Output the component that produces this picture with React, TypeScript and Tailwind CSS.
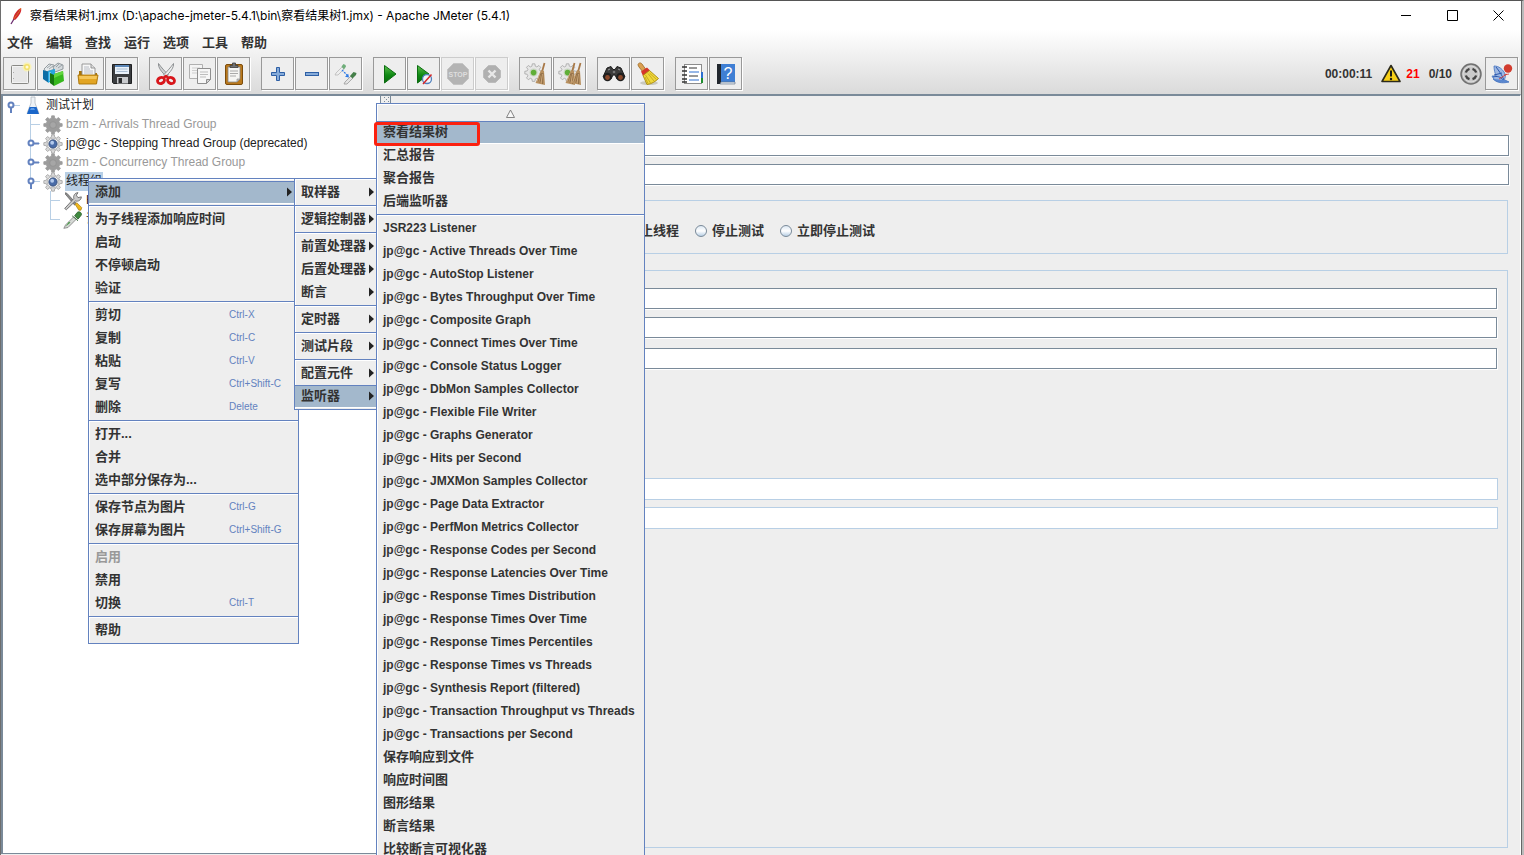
import type { ReactNode } from "react";
import clsx from "clsx";

type Handle = "open" | "closed" | "none";

interface MenuEntry {
  label: string;
  keys?: string;
  sub?: boolean;
  active?: boolean;
  disabled?: boolean;
}

const menuBar = ["文件", "编辑", "查找", "运行", "选项", "工具", "帮助"];

const nodeMenu: MenuEntry[][] = [
  [{ label: "添加", sub: true, active: true }],
  [{ label: "为子线程添加响应时间" }, { label: "启动" }, { label: "不停顿启动" }, { label: "验证" }],
  [
    { label: "剪切", keys: "Ctrl-X" },
    { label: "复制", keys: "Ctrl-C" },
    { label: "粘贴", keys: "Ctrl-V" },
    { label: "复写", keys: "Ctrl+Shift-C" },
    { label: "删除", keys: "Delete" },
  ],
  [{ label: "打开..." }, { label: "合并" }, { label: "选中部分保存为..." }],
  [
    { label: "保存节点为图片", keys: "Ctrl-G" },
    { label: "保存屏幕为图片", keys: "Ctrl+Shift-G" },
  ],
  [{ label: "启用", disabled: true }, { label: "禁用" }, { label: "切换", keys: "Ctrl-T" }],
  [{ label: "帮助" }],
];

const addMenu: MenuEntry[][] = [
  [{ label: "取样器", sub: true }],
  [{ label: "逻辑控制器", sub: true }],
  [
    { label: "前置处理器", sub: true },
    { label: "后置处理器", sub: true },
    { label: "断言", sub: true },
  ],
  [{ label: "定时器", sub: true }],
  [{ label: "测试片段", sub: true }],
  [
    { label: "配置元件", sub: true },
    { label: "监听器", sub: true, active: true },
  ],
];

const listenerMenu: MenuEntry[][] = [
  [{ label: "察看结果树", active: true }, { label: "汇总报告" }, { label: "聚合报告" }, { label: "后端监听器" }],
  [
    { label: "JSR223 Listener" },
    { label: "jp@gc - Active Threads Over Time" },
    { label: "jp@gc - AutoStop Listener" },
    { label: "jp@gc - Bytes Throughput Over Time" },
    { label: "jp@gc - Composite Graph" },
    { label: "jp@gc - Connect Times Over Time" },
    { label: "jp@gc - Console Status Logger" },
    { label: "jp@gc - DbMon Samples Collector" },
    { label: "jp@gc - Flexible File Writer" },
    { label: "jp@gc - Graphs Generator" },
    { label: "jp@gc - Hits per Second" },
    { label: "jp@gc - JMXMon Samples Collector" },
    { label: "jp@gc - Page Data Extractor" },
    { label: "jp@gc - PerfMon Metrics Collector" },
    { label: "jp@gc - Response Codes per Second" },
    { label: "jp@gc - Response Latencies Over Time" },
    { label: "jp@gc - Response Times Distribution" },
    { label: "jp@gc - Response Times Over Time" },
    { label: "jp@gc - Response Times Percentiles" },
    { label: "jp@gc - Response Times vs Threads" },
    { label: "jp@gc - Synthesis Report (filtered)" },
    { label: "jp@gc - Transaction Throughput vs Threads" },
    { label: "jp@gc - Transactions per Second" },
    { label: "保存响应到文件" },
    { label: "响应时间图" },
    { label: "图形结果" },
    { label: "断言结果" },
    { label: "比较断言可视化器" },
  ],
];

const isLatin = (s: string) => /^[\x20-\x7e]+$/.test(s);

function Svg({ children, size = 24 }: { children: ReactNode; size?: number }) {
  return (
    <svg width={size} height={size} viewBox="0 0 24 24" fill="none" aria-hidden="true" className="shrink-0">
      {children}
    </svg>
  );
}

/* ---------- toolbar icons ---------- */

const NewIcon = () => (
  <Svg>
    <rect x="3.500" y="3.500" width="17" height="18" rx="1" fill="#f3f3f3" stroke="#8a8a86" />
    <rect x="5" y="5" width="14" height="15" fill="#e6e6e6" />
    <path d="M5.500 10v1M5.500 16v1" stroke="#aaa" />
    <circle cx="19" cy="5" r="4.500" fill="#fdf3a0" opacity=".7" />
    <circle cx="19" cy="5" r="3" fill="#f3e06a" />
    <circle cx="19" cy="5" r="1.500" fill="#fffbd8" />
  </Svg>
);

const TemplatesIcon = () => (
  <Svg>
    <path d="M2 7l5-5 5 1 1 4-9 3z" fill="#e4e8ea" stroke="#7d868c" strokeWidth=".8" />
    <path d="M11 5l5-4 5 2v4l-8 3z" fill="#d5dadd" stroke="#7d868c" strokeWidth=".8" />
    <path d="M5 6l4-3M7 7l4-3M14 5l3-3M16 6l4-3" stroke="#8b9499" strokeWidth=".8" />
    <path d="M1 8l5 1.500v11L1 17z" fill="#0d6ea6" />
    <path d="M6 9l7-2v10l-7 4z" fill="#26a7e0" />
    <path d="M8 10v9" stroke="#bfe8fa" />
    <path d="M8 11l4 2v11l-4-3z" fill="#16760f" />
    <path d="M12 12l9-3 1 10-10 5z" fill="#37b81d" />
    <path d="M12 12l9-3 .3 3-9.300 4z" fill="#63d63f" />
  </Svg>
);

const OpenIcon = () => (
  <Svg>
    <path d="M3 9h5l2 2h11v10H3z" fill="#a8740a" />
    <path d="M6 2h9l4 4v10H6z" fill="#f7f7f7" stroke="#8e8e8e" strokeWidth=".9" />
    <path d="M15 2v4h4" fill="#ddd" stroke="#8e8e8e" strokeWidth=".9" />
    <path d="M8 5h5M8 7h6M8 9h9M8 11h9" stroke="#b8bcc4" />
    <path d="M2 13h20l-1.500 9H3z" fill="#e2a524" stroke="#a8740a" strokeWidth=".9" />
    <path d="M3 14h18l-.5 3H3.500z" fill="#f4c65a" />
  </Svg>
);

const SaveIcon = () => (
  <Svg>
    <path d="M2.500 2.500h19v19h-18l-1-1z" fill="#3b3d40" stroke="#1f2022" />
    <rect x="5" y="3" width="14" height="9" fill="#eaf2fa" />
    <rect x="5" y="3" width="14" height="2" fill="#5c87b8" />
    <path d="M6.500 7h11M6.500 9.500h11" stroke="#a9bdd2" />
    <rect x="7" y="15" width="11" height="6.500" fill="#c9cbce" />
    <rect x="8.500" y="16" width="3.500" height="5" fill="#2a2b2d" />
  </Svg>
);

const CutIcon = () => (
  <Svg>
    <path d="M4.500 1.500c-.5 4 3 8.500 8 13l2-1.500C10.500 9 7 5 4.500 1.500z" fill="#d0d2d3" stroke="#85888a" strokeWidth=".9" />
    <path d="M19.500 1.500c.5 4-3 8.500-8 13l-2-1.500c4-4 7.500-8 10-11.500z" fill="#edeeee" stroke="#85888a" strokeWidth=".9" />
    <ellipse cx="7" cy="18.500" rx="3.600" ry="2.900" stroke="#d8161b" strokeWidth="2.800" transform="rotate(-25 7 18.500)" />
    <ellipse cx="17" cy="18.500" rx="3.600" ry="2.900" stroke="#d8161b" strokeWidth="2.800" transform="rotate(25 17 18.500)" />
    <path d="M9.500 16L12 14l2.500 2" stroke="#d8161b" strokeWidth="2.400" />
  </Svg>
);

const CopyIcon = () => (
  <Svg>
    <path d="M1.500 2.500h13v14h-13z" fill="#f4f4f4" stroke="#b0b0b0" />
    <path d="M4 6h8M4 8.500h8M4 11h5" stroke="#cfcfcf" />
    <path d="M9.500 6.500h13v11l-4 4h-9z" fill="#f6f6f6" stroke="#8f8f8f" />
    <path d="M12 10h8M12 12.500h8M12 15h6" stroke="#bdbdbd" />
    <path d="M18.500 21.500v-4h4z" fill="#d2d2d2" stroke="#8f8f8f" />
  </Svg>
);

const PasteIcon = () => (
  <Svg>
    <rect x="3.500" y="2.500" width="17" height="20" rx="1.500" fill="#b9781c" stroke="#7c4c0c" />
    <path d="M6 5h12v12l-3 3H6z" fill="#f5f5f3" stroke="#888" strokeWidth=".8" />
    <path d="M8 9h8M8 11.500h8M8 14h6" stroke="#a9a9a9" />
    <path d="M15 20v-3h3z" fill="#c9c9c9" stroke="#888" strokeWidth=".6" />
    <path d="M8 5.500V3.500h2.500V1h3v2.500H16v2z" fill="#6f7173" stroke="#3d3e3f" strokeWidth=".8" />
  </Svg>
);

const PlusIcon = () => (
  <Svg>
    <path d="M10.500 5.500h3v5h5v3h-5v5h-3v-5h-5v-3h5z" fill="#86abd9" stroke="#2d5fa5" />
  </Svg>
);

const MinusIcon = () => (
  <Svg>
    <rect x="5.500" y="10.500" width="13" height="3" fill="#86abd9" stroke="#2d5fa5" />
  </Svg>
);

const ToggleIcon = () => (
  <Svg>
    <path d="M1 13l1-2 6-6 2 2-6 6z" fill="#eee" stroke="#b8b8b8" strokeWidth=".8" />
    <path d="M7.500 4.500l2-2.500 2 1 .5 1.500-2 3z" fill="#6fae7a" />
    <path d="M8 8l6 6" stroke="#2f7be6" strokeWidth="1.300" strokeDasharray="2 1" />
    <path d="M15 15.500l-4-.8 3.200-3z" fill="#2f7be6" />
    <path d="M10 22l1-2 6-6 2 2-6 6z" fill="#e4e4e4" stroke="#9a9a9a" strokeWidth=".8" />
    <path d="M16 14l3.500-4 3 1-.5 2-3.500 3.500z" fill="#46804a" />
  </Svg>
);

const PlayIcon = () => (
  <Svg>
    <defs>
      <linearGradient id="play" x1="0" y1="0" x2="0" y2="1">
        <stop offset="0" stopColor="#5fbf4d" />
        <stop offset=".55" stopColor="#0f8a14" />
        <stop offset="1" stopColor="#0a6a0e" />
      </linearGradient>
    </defs>
    <path d="M6.500 3.500L18 12 6.500 21z" fill="url(#play)" stroke="#0b6d10" />
  </Svg>
);

const PlayNoPauseIcon = () => (
  <Svg>
    <path d="M5.500 3.500L17 12 5.500 21z" fill="url(#play)" stroke="#0b6d10" />
    <circle cx="15" cy="17" r="4.500" fill="#f2f5fa" stroke="#5080bd" strokeWidth="1.300" />
    <path d="M11 22l8.500-9.500" stroke="#d42828" strokeWidth="1.500" />
  </Svg>
);

const StopIcon = () => (
  <Svg>
    <path d="M7.500 1.500h9l6 6v9l-6 6h-9l-6-6v-9z" fill="#b4b4b4" stroke="#c4c4c4" />
    <text x="12" y="15" textAnchor="middle" fontSize="7" fontWeight="700" fill="#dedede" fontFamily="Liberation Sans">
      STOP
    </text>
  </Svg>
);

const ShutdownIcon = () => (
  <Svg>
    <path d="M8.500 3.500h7l5 5v7l-5 5h-7l-5-5v-7z" fill="#b0b0b0" stroke="#bcbcbc" />
    <path d="M8.500 8.500l7 7M15.500 8.500l-7 7" stroke="#e8e8e8" strokeWidth="2.400" />
  </Svg>
);

const gearPath =
  "M10.400 1h3.200l.5 3 2 .9 2.500-1.800 2.300 2.300-1.800 2.500.9 2 3 .5v3.200l-3 .5-.9 2 1.800 2.500-2.300 2.300-2.500-1.800-2 .9-.5 3h-3.200l-.5-3-2-.9-2.500 1.800-2.300-2.300 1.800-2.500-.9-2-3-.5v-3.200l3-.5.900-2L3.100 5.400l2.300-2.300 2.500 1.800 2-.9z";

const BroomHead = ({ x }: { x: number }) => (
  <g transform={`translate(${x} 0)`}>
    <path d="M14.500 1l-2.500 9" stroke="#a87846" strokeWidth="1.800" />
    <path d="M11 8l3 1 1 14-9.500-2 3-7z" fill="#b8905f" />
    <path d="M11 11l-3.500 9M12 11l-2 10M13 11l-.5 11" stroke="#80603c" strokeWidth=".7" />
    <path d="M10 11l-3 9M12.500 12l-1.500 9" stroke="#dcb98f" strokeWidth=".6" />
  </g>
);

const ClearIcon = () => (
  <Svg>
    <g transform="translate(0 1) scale(.8)">
      <path d={gearPath} fill="#e6e6e6" stroke="#a5a5a5" />
      <circle cx="12" cy="12" r="5" fill="#c9d6c2" />
      <circle cx="12" cy="12" r="3.500" fill="#5fae37" />
    </g>
    <BroomHead x={6} />
  </Svg>
);

const ClearAllIcon = () => (
  <Svg>
    <g transform="translate(0 1) scale(.8)">
      <path d={gearPath} fill="#e6e6e6" stroke="#a5a5a5" />
      <circle cx="12" cy="12" r="5" fill="#c9d6c2" />
      <circle cx="12" cy="12" r="3.500" fill="#5fae37" />
    </g>
    <BroomHead x={2} />
    <BroomHead x={8} />
  </Svg>
);

const SearchIcon = () => (
  <Svg>
    <path d="M5 6l4-1.500 2 3h2l2-3L19 6l4 9-8 2-2-4h-2l-2 4-8-2z" fill="#3c3c3c" stroke="#1d1d1d" />
    <circle cx="5.500" cy="15" r="4.300" fill="#1f1f1f" />
    <circle cx="18.500" cy="15" r="4.300" fill="#1f1f1f" />
    <circle cx="5.500" cy="15.500" r="2.400" fill="#8c4a2c" />
    <circle cx="18.500" cy="15.500" r="2.400" fill="#8c4a2c" />
    <path d="M6 8l2-1M16 7l2 1" stroke="#9a9a9a" />
    <circle cx="12" cy="10" r="1.300" fill="#777" />
  </Svg>
);

const ResetIcon = () => (
  <Svg>
    <ellipse cx="13" cy="21" rx="9" ry="2" fill="#c9c9c0" />
    <path d="M2 3c0-2 2.500-3 4-1l3.500 5-3 2.500L3 5z" fill="#dba052" stroke="#9b6a22" strokeWidth=".8" />
    <path d="M5 9.500l6-4 3 3-7 5.500z" fill="#d6362a" />
    <path d="M7 13.500l6.500-5 9 8c-3 3-7 5.500-11.500 6z" fill="#f0d83a" stroke="#a8890e" strokeWidth=".9" />
    <path d="M9.500 13l5 8M12 11.500l6 7.500M9 15l3 6.500M13.500 11l7 6.500" stroke="#bda01c" strokeWidth=".8" />
  </Svg>
);

const FunctionIcon = () => (
  <Svg>
    <rect x="4.500" y="2.500" width="17" height="19" fill="#fff" stroke="#8c8c8c" />
    <path d="M2 5h5M2 9h5M2 13h5M2 17h5M2 20h5" stroke="#333" strokeWidth="1.300" />
    <path d="M9 6h8M9 14h9" stroke="#333" />
    <path d="M9 10h10M9 18h10" stroke="#2c6fd0" />
    <rect x="21" y="10" width="2" height="6" fill="#2c6fd0" />
    <rect x="21" y="16" width="2" height="5" fill="#1e8e2e" />
  </Svg>
);

const HelpIcon = () => (
  <Svg>
    <path d="M3 2h5v20H3z" fill="#22272e" />
    <rect x="7" y="2" width="14" height="18" fill="#3f7fd4" />
    <path d="M7 20h14v2H6z" fill="#dfe5ee" stroke="#5a6b80" strokeWidth=".6" />
    <text x="14" y="17" textAnchor="middle" fontSize="16" fill="#fff" fontFamily="Liberation Sans">
      ?
    </text>
  </Svg>
);

const FeatherIcon = () => (
  <Svg>
    <path d="M4 4c5 0 8 3 10 6 2 3 2 6-1 9-4 1-9 0-11-5l4 0c-1-3-2-6-2-10z" fill="#9db7e2" stroke="#3f6fbe" strokeWidth=".8" />
    <path d="M3 15c4-1 7-1 11 4M6 5c3 4 6 8 8 13M4 13l8-2" stroke="#2a56ad" />
    <path d="M3 17c3 3 8 5 16 3l-4-2" fill="#5a87cf" stroke="#3f6fbe" strokeWidth=".8" />
    <path d="M14 13l5-1M9 17l8-5" stroke="#d8362c" strokeWidth=".8" />
    <circle cx="18" cy="6.500" r="4.200" fill="#d23c2e" />
  </Svg>
);

const WarningIcon = () => (
  <svg width="20" height="19" viewBox="0 0 20 19" aria-hidden="true">
    <path d="M10 1.500L19 17.500H1z" fill="#f7cf17" stroke="#2c2a1c" strokeWidth="1.600" strokeLinejoin="round" />
    <path d="M10 6.500v6" stroke="#1d1c14" strokeWidth="2" />
    <circle cx="10" cy="15" r="1.200" fill="#1d1c14" />
  </svg>
);

const ExpandIcon = () => (
  <svg width="22" height="22" viewBox="0 0 22 22" fill="none" aria-hidden="true">
    <circle cx="11" cy="11" r="10" fill="#b4b4b4" stroke="#707070" strokeWidth="1.500" />
    <circle cx="11" cy="11" r="8" fill="#cacaca" stroke="#dedede" />
    <path
      d="M5.800 9.500a5.500 5.500 0 0 1 3.700-3.700M12.500 5.800a5.500 5.500 0 0 1 3.700 3.700M16.200 12.500a5.500 5.500 0 0 1-3.700 3.700M9.500 16.200a5.500 5.500 0 0 1-3.700-3.700"
      stroke="#444"
      strokeWidth="2.400"
    />
  </svg>
);

/* ---------- tree icons ---------- */

const FlaskIcon = () => (
  <svg width="20" height="19" viewBox="0 0 20 19" aria-hidden="true" className="shrink-0">
    <path d="M8 1h4v6l4 10.500H4L8 7z" fill="#eef2f6" stroke="#b3bac2" strokeWidth=".8" />
    <path d="M6.500 11h7l2.500 7H4z" fill="#1b66c9" />
    <path d="M8 12h3l1 2H7z" fill="#5b9bea" />
  </svg>
);

const GearIcon = ({ disabled }: { disabled?: boolean }) => (
  <Svg size={20}>
    <path d={gearPath} fill={disabled ? "#9c9c9c" : "#d9d9d9"} stroke={disabled ? "#a0a0a0" : "#a4a4a4"} />
    {disabled ? (
      <circle cx="12" cy="12" r="4" fill="#a6a6a6" stroke="#929292" />
    ) : (
      <>
        <circle cx="12" cy="12" r="7" fill="#f4f4f4" stroke="#b5b5b5" />
        <circle cx="12" cy="12" r="5" fill="#4a6ca8" stroke="#3c4f74" />
        <circle cx="11" cy="10.500" r="2.300" fill="#b4caec" />
      </>
    )}
  </Svg>
);

const ToolsIcon = () => (
  <Svg size={20}>
    <path d="M3 2l2 1 11 12-2 2L3 4z" fill="#8d8d8d" stroke="#555" strokeWidth=".8" />
    <path d="M14.500 16l2-2 6 6-1 3-2.500 0z" fill="#efb71c" stroke="#a87a08" strokeWidth=".8" />
    <path d="M2 21l11-12c-1-3 1-7 5-7l-2 3 2 3 4-1c0 4-4 6-7 5L4 22.500z" fill="#c9c9c9" stroke="#555" strokeWidth=".9" />
  </Svg>
);

const DropperIcon = () => (
  <Svg size={20}>
    <path d="M1 22l2-4L13 8l3 3L6 21z" fill="#d5d8d5" stroke="#777" strokeWidth=".9" />
    <path d="M11 7l7 6M14 7l3-4c2-2 6 0 5 3l-4 5z" fill="#3f8a3f" stroke="#2c5f2c" />
    <path d="M3 20l6-5-2-1z" fill="#4c9b4c" />
  </Svg>
);

/* Guide line and expand handle in front of a node */
function Guide({ handle, first, last }: { handle: Handle; first?: boolean; last?: boolean }) {
  return (
    <svg width="20" height="19" viewBox="0 0 20 19" fill="none" aria-hidden="true" className="shrink-0">
      <path d={clsx(!first && "M7.500 0V9", !last && "M7.500 9V19", "M7 9.500H17")} stroke="#b8cfe5" />
      {handle !== "none" && (
        <>
          <path d={handle === "open" ? "M8 9v8" : "M8 9.500h8"} stroke="#6382bf" strokeWidth="2" />
          <circle cx="8" cy="9" r="2.500" fill="#fff" stroke="#6382bf" strokeWidth="2" />
        </>
      )}
    </svg>
  );
}

interface NodeProps {
  label: string;
  icon: ReactNode;
  handle: Handle;
  level: 0 | 1 | 2;
  disabled?: boolean;
  selected?: boolean;
  last?: boolean;
}

function TreeNode({ label, icon, handle, level, disabled, selected, last }: NodeProps) {
  return (
    <li className={clsx("flex h-[19px] items-center", level === 1 && "pl-5", level === 2 && "pl-10")}>
      <Guide handle={handle} first={level === 0} last={last || level === 0} />
      {icon}
      <span
        className={clsx(
          "ml-0.5 px-px text-[12px] leading-[19px] whitespace-nowrap",
          disabled ? "text-[#999]" : "text-[#222]",
          selected && "bg-[#b8cfe5]"
        )}
      >
        {label}
      </span>
    </li>
  );
}

function ToolButton({ label, disabled, children }: { label: string; disabled?: boolean; children: ReactNode }) {
  return (
    <button
      type="button"
      aria-label={label}
      disabled={disabled}
      className={clsx(
        "flex size-[33px] shrink-0 items-center justify-center border bg-[#eee] shadow-[1px_1px_0_#fff]",
        disabled ? "border-[#ccc]" : "border-[#999]"
      )}
    >
      {children}
    </button>
  );
}

const toolGroups: { label: string; icon: ReactNode; disabled?: boolean }[][] = [
  [
    { label: "新建", icon: <NewIcon /> },
    { label: "模板", icon: <TemplatesIcon /> },
    { label: "打开", icon: <OpenIcon /> },
    { label: "保存", icon: <SaveIcon /> },
  ],
  [
    { label: "剪切", icon: <CutIcon /> },
    { label: "复制", icon: <CopyIcon /> },
    { label: "粘贴", icon: <PasteIcon /> },
  ],
  [
    { label: "全部展开", icon: <PlusIcon /> },
    { label: "全部折叠", icon: <MinusIcon /> },
    { label: "切换", icon: <ToggleIcon /> },
  ],
  [
    { label: "启动", icon: <PlayIcon /> },
    { label: "不停顿启动", icon: <PlayNoPauseIcon /> },
    { label: "停止", icon: <StopIcon />, disabled: true },
    { label: "关闭", icon: <ShutdownIcon />, disabled: true },
  ],
  [
    { label: "清除", icon: <ClearIcon /> },
    { label: "清除全部", icon: <ClearAllIcon /> },
  ],
  [
    { label: "查找", icon: <SearchIcon /> },
    { label: "重置查找", icon: <ResetIcon /> },
  ],
  [
    { label: "函数助手", icon: <FunctionIcon /> },
    { label: "帮助", icon: <HelpIcon /> },
  ],
];

function MenuList({ groups }: { groups: MenuEntry[][] }) {
  return (
    <>
      {groups.map((group, i) => (
        <ul key={i}>
          {i > 0 && <li role="separator" className="mt-px mb-0.5 border-t border-[#6382bf] shadow-[0_1px_0_#fff]" />}
          {group.map((item) => (
            <li key={item.label}>
              <button
                type="button"
                role="menuitem"
                disabled={item.disabled}
                className={clsx(
                  "flex h-[23px] w-full items-start border-y pr-1.5 pl-1.5 text-left leading-5 font-bold whitespace-nowrap",
                  isLatin(item.label) ? "text-[12px]" : "text-[13px]",
                  item.active ? "border-t-[#6382bf] border-b-white bg-[#a3b8cc]" : "border-transparent",
                  item.disabled ? "text-[#999]" : "text-[#333]"
                )}
              >
                <span className="flex-1">{item.label}</span>
                {item.keys && <span className="w-[63px] text-[10px] font-normal text-[#6382bf]">{item.keys}</span>}
                {item.sub && (
                  <svg width="5" height="20" viewBox="0 0 5 20" aria-hidden="true">
                    <path d="M0 5.500l5 4.500-5 4.500z" fill="#222" />
                  </svg>
                )}
              </button>
            </li>
          ))}
        </ul>
      ))}
    </>
  );
}

function Field({ label, light }: { label: string; light?: boolean }) {
  return (
    <input
      type="text"
      aria-label={label}
      className={clsx(
        "block w-full border bg-white px-1 text-[12px] outline-none",
        light ? "h-[22px] border-[#b8cfe5]" : "h-[21px] border-[#7a8a99] shadow-[1px_1px_0_#fff]"
      )}
    />
  );
}

function Radio({ label }: { label: string }) {
  return (
    <label className="flex items-center gap-[5px] text-[13px] font-bold whitespace-nowrap">
      <input
        type="radio"
        name="on-error"
        className="size-3 appearance-none rounded-full border border-[#7a8a99] bg-linear-to-b from-[#dde8f3] via-white to-[#b8cfe5]"
      />
      {label}
    </label>
  );
}

export default function App() {
  return (
    <div className="relative flex h-screen flex-col overflow-hidden border-t border-r-2 border-l border-t-[#555] border-r-[#bbb] border-l-[#6e6e6e] bg-[#eee] font-['Liberation_Sans','Noto_Sans_CJK_SC',sans-serif] text-[#333]">
      <div className="flex min-h-0 flex-1 flex-col border-r border-[#666]">
        {/* Title bar */}
        <header className="flex h-[29px] shrink-0 items-center bg-white pr-[17px] pl-2 text-black">
          <svg width="14" height="18" viewBox="0 0 14 18" aria-hidden="true">
            <path d="M12 1c1 3-1 7-6 12l-2-1c1-5 4-9 8-11z" fill="#d4252c" />
            <path d="M12 1c-2 4-5 8-8 12" stroke="#f08a30" strokeWidth=".8" />
            <path d="M5 12l-3 5" stroke="#6b2b6e" strokeWidth="1.300" />
          </svg>
          <h1 className="ml-[7px] flex-1 font-['Inter','Noto_Sans_CJK_SC',sans-serif] text-[12px] whitespace-nowrap">
            察看结果树1.jmx (D:\apache-jmeter-5.4.1\bin\察看结果树1.jmx) - Apache JMeter (5.4.1)
          </h1>
          <div className="flex gap-[35px]">
            <button type="button" aria-label="最小化">
              <svg width="11" height="11" viewBox="0 0 11 11" fill="none" stroke="#000"><path d="M0 5.500h10" /></svg>
            </button>
            <button type="button" aria-label="最大化">
              <svg width="11" height="11" viewBox="0 0 11 11" fill="none" stroke="#000"><path d="M.5.5h10v10h-10z" /></svg>
            </button>
            <button type="button" aria-label="关闭">
              <svg width="11" height="11" viewBox="0 0 11 11" fill="none" stroke="#000"><path d="M.5.5l10 10M10.500.5l-10 10" /></svg>
            </button>
          </div>
        </header>

        <div className="shrink-0 bg-linear-to-b from-white to-[#dadada]">
          <nav className="mb-px flex h-[26px] items-center gap-[13px] pl-1.5 text-[13px] font-bold">
            {menuBar.map((m) => (
              <button key={m} type="button" className="leading-5">{m}</button>
            ))}
          </nav>

          {/* Toolbar */}
          <div className="flex items-start gap-[11px] pr-[3px] pb-1 pl-0.5">
            {toolGroups.map((group, i) => (
              <div key={i} className="flex gap-px">
                {group.map((t) => (
                  <ToolButton key={t.label} label={t.label} disabled={t.disabled}>{t.icon}</ToolButton>
                ))}
              </div>
            ))}
            <div className="ml-auto flex h-[33px] items-center text-[12px] font-bold">
              <span>00:00:11</span>
              <button type="button" aria-label="日志" className="ml-[9px] flex items-center gap-[5px] text-[#f00]">
                <WarningIcon />
                21
              </button>
              <span className="mr-2 ml-[9px]">0/10</span>
              <ExpandIcon />
              <div className="ml-[3px]">
                <ToolButton label="远程启动"><FeatherIcon /></ToolButton>
              </div>
            </div>
          </div>
        </div>

        {/* Tree on the left, element panel on the right */}
        <main className="flex min-h-0 flex-1 border-t-2 border-r border-t-[#7a8a99] border-r-white">
          <div className="mb-px w-[380px] shrink-0 border-r border-b border-l-2 border-[#7a8a99] bg-white">
            <ul>
              <TreeNode level={0} handle="open" icon={<FlaskIcon />} label="测试计划" />
              <TreeNode level={1} handle="none" icon={<GearIcon disabled />} label="bzm - Arrivals Thread Group" disabled />
              <TreeNode level={1} handle="closed" icon={<GearIcon />} label="jp@gc - Stepping Thread Group (deprecated)" />
              <TreeNode level={1} handle="closed" icon={<GearIcon disabled />} label="bzm - Concurrency Thread Group" disabled />
              <TreeNode level={1} handle="open" icon={<GearIcon />} label="线程组" selected last />
              <TreeNode level={2} handle="none" icon={<ToolsIcon />} label="H" />
              <TreeNode level={2} handle="none" icon={<DropperIcon />} label="请" last />
            </ul>
          </div>
          <div className="w-[9px] shrink-0">
            <svg width="9" height="8" viewBox="0 0 9 8" aria-hidden="true">
              <path d="M3 1h1v1H3zM5 3h1v1H5zM3 5h1v1H3zM7 1h1v1H7zM7 5h1v1H7z" fill="#7a8a99" />
            </svg>
          </div>
          <form className="flex min-w-0 flex-1 flex-col border-l border-[#7a8a99] pt-[39px] pb-[7px] pl-3">
            <div className="flex flex-col gap-2 pr-[11px] pl-12">
              <Field label="名称" />
              <Field label="注释" />
            </div>
            <fieldset className="mt-[15px] mr-3 flex h-[54px] shrink-0 items-start gap-4 border border-[#b8cfe5] pt-5 pl-[206px]">
              <Radio label="停止线程" />
              <Radio label="停止测试" />
              <Radio label="立即停止测试" />
            </fieldset>
            <fieldset className="mt-4 mr-3 flex-1 border border-[#b8cfe5] pt-[17px] pl-24">
              <div className="flex flex-col gap-2 pr-2.5">
                <Field label="线程数" />
                <Field label="Ramp-Up" />
                <div className="mt-0.5">
                  <Field label="循环次数" />
                </div>
              </div>
              <div className="mt-[109px] flex flex-col gap-[7px] pr-[9px]">
                <Field label="持续时间" light />
                <Field label="启动延迟" light />
              </div>
            </fieldset>
          </form>
        </main>
      </div>

      {/* Popup menus */}
      <div role="menu" className="absolute top-[177px] left-[87px] w-[211px] border border-[#6382bf] bg-[#eee] pt-0.5 pb-px shadow-[inset_1px_1px_0_#fff]">
        <MenuList groups={nodeMenu} />
      </div>
      <div role="menu" className="absolute top-[177px] left-[293px] w-[87px] border border-[#6382bf] bg-[#eee] pt-0.5 pb-px shadow-[inset_1px_1px_0_#fff]">
        <MenuList groups={addMenu} />
      </div>
      <div role="menu" className="absolute top-[102px] left-[375px] w-[269px] border border-[#6382bf] bg-[#eee] shadow-[inset_1px_1px_0_#fff]">
        <div className="flex h-[17px] items-center justify-center pt-0.5">
          <svg width="9" height="9" viewBox="0 0 9 9" aria-hidden="true">
            <path d="M4.500 1L8.500 8.500h-8z" fill="#f8f8f8" stroke="#777" strokeWidth=".9" />
          </svg>
        </div>
        <MenuList groups={listenerMenu} />
      </div>
      <div className="pointer-events-none absolute top-[121px] left-[373px] h-6 w-[106px] rounded-[3px] border-3 border-[#fb2110]" />
    </div>
  );
}
